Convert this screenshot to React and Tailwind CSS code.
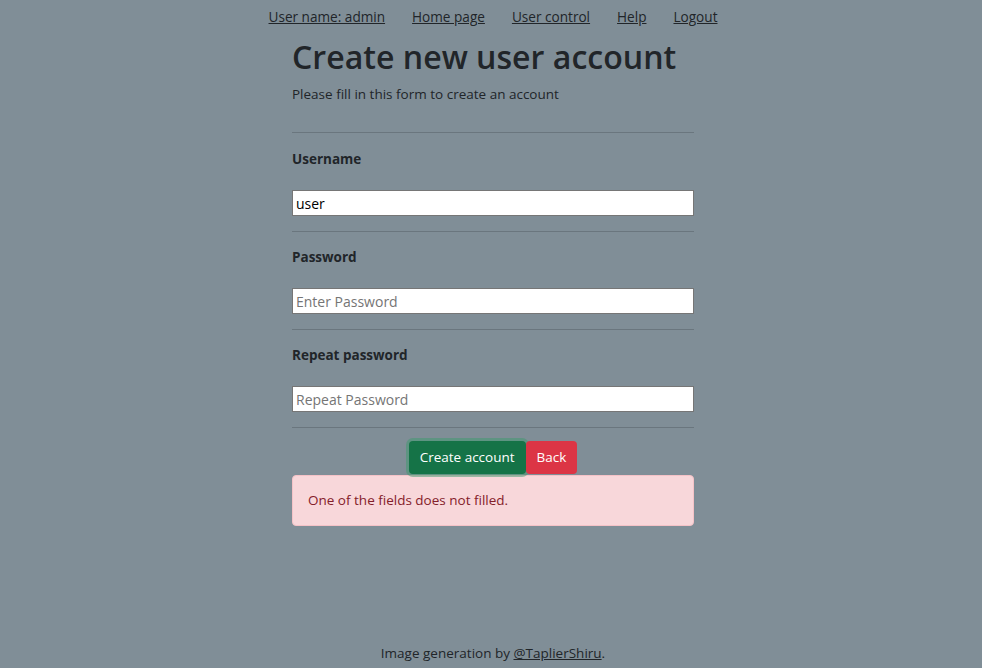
import React from 'react';

export default function App() {
  const links = ['User name: admin', 'Home page', 'User control', 'Help', 'Logout'];

  return (
    <div className="min-h-[668px] bg-[#808e97] text-[#212529] flex flex-col items-center font-['Open_Sans',sans-serif]">
      {/* Top nav */}
      <nav className="flex gap-[27px] pt-[7px] text-[13.6px] leading-[20px] ml-[4px]">
        {links.map((l) => (
          <a key={l} href="#" className="underline text-[#212529]">
            {l}
          </a>
        ))}
      </nav>

      {/* Form */}
      <div className="w-[402px] ml-[4px]">
        <h1 className="text-[32.1px] leading-[40px] font-semibold mt-[10px]">Create new user account</h1>
        <p className="text-[13.5px] leading-[20px] mt-[7px]">Please fill in this form to create an account</p>

        <hr className="mt-[28px] border-0 border-t border-[#6a767e]" />
        <label className="block font-bold text-[13.5px] leading-[20px] mt-[16px]">Username</label>
        <input
          className="block w-full h-[26px] mt-[21px] bg-white border border-[#767676] px-[3px] text-[14px] text-black outline-none"
          defaultValue="user"
        />

        <hr className="mt-[15px] border-0 border-t border-[#6a767e]" />
        <label className="block font-bold text-[13.5px] leading-[20px] mt-[15px]">Password</label>
        <input
          type="password"
          placeholder="Enter Password"
          className="block w-full h-[26px] mt-[21px] bg-white border border-[#767676] px-[3px] text-[14px] placeholder:text-[#757575] outline-none"
        />

        <hr className="mt-[15px] border-0 border-t border-[#6a767e]" />
        <label className="block font-bold text-[13.5px] leading-[20px] mt-[15px]">Repeat password</label>
        <input
          type="password"
          placeholder="Repeat Password"
          className="block w-full h-[26px] mt-[21px] bg-white border border-[#767676] px-[3px] text-[14px] placeholder:text-[#757575] outline-none"
        />

        <hr className="mt-[15px] border-0 border-t border-[#6a767e]" />

        <div className="flex justify-center mt-[13px]">
          <button className="h-[33px] px-[11px] bg-[#157347] text-white text-[13.5px] rounded-[4px] shadow-[0_0_0_3px_rgba(60,153,110,0.5)]">
            Create account
          </button>
          <button className="h-[33px] px-[11px] bg-[#dc3545] text-white text-[13.5px] rounded-[4px]">Back</button>
        </div>

        <div className="mt-px h-[51px] flex items-center px-[15px] bg-[#f8d7da] border border-[#f5c2c7] rounded-[4px] text-[#842029] text-[13.5px]">
          One of the fields does not filled.
        </div>
      </div>

      <div className="mt-auto pb-[5px] text-[13.5px] leading-[20px] ml-[4px]">
        Image generation by{' '}
        <a href="#" className="underline">
          @TaplierShiru
        </a>
        .
      </div>
    </div>
  );
}
